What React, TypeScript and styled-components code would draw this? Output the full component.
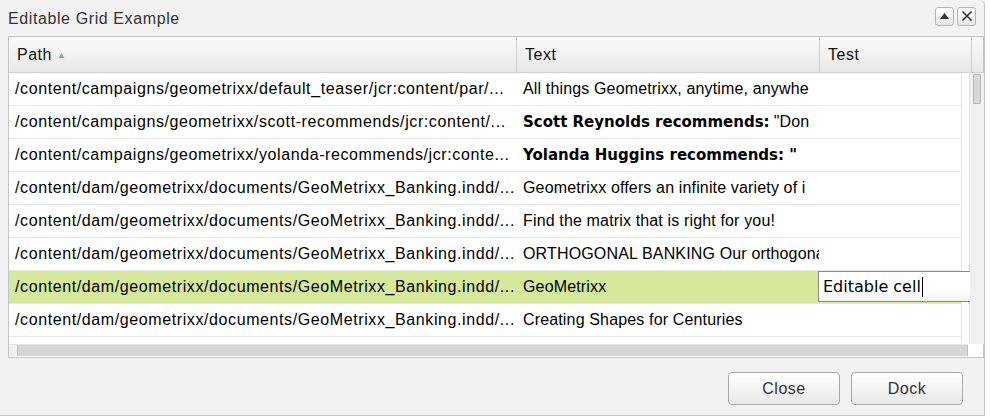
import React from "react";
import styled, { createGlobalStyle } from "styled-components";

const GlobalStyle = createGlobalStyle`
    html, body {
        margin: 0;
        padding: 0;
        background: #ffffff;
    }
    body {
        font-family: "Liberation Sans", Arial, sans-serif;
    }
`;

const Window = styled.div`
    width: 985px;
    height: 416px;
    background: #f2f2f2;
    border-right: 1px solid #c4c4c4;
    border-bottom: 1px solid #c4c4c4;
    border-top-right-radius: 5px;
    display: flex;
    flex-direction: column;
    box-sizing: border-box;
`;

const TitleBar = styled.div`
    height: 36px;
    display: flex;
    align-items: center;
    justify-content: space-between;
    padding-left: 8px;
    padding-right: 8px;
    box-sizing: border-box;
`;

const Title = styled.span`
    font-size: 16px;
    letter-spacing: 0.6px;
    color: #333333;
    padding-top: 2px;
`;

const Tools = styled.div`
    display: flex;
    gap: 3px;
    margin-top: -4px;
`;

const ToolButton = styled.div`
    width: 19px;
    height: 19px;
    border: 1px solid #b4b4b4;
    border-radius: 3px;
    background: linear-gradient(#ffffff, #e6e6e6);
    display: flex;
    align-items: center;
    justify-content: center;
    box-sizing: border-box;
`;

const Grid = styled.div`
    margin-left: 8px;
    width: 976px;
    height: 322px;
    border: 1px solid #c4c4c4;
    background: #ffffff;
    display: flex;
    flex-direction: column;
    box-sizing: border-box;
`;

const HeaderRow = styled.div`
    display: flex;
    height: 36px;
    background: linear-gradient(#fafafa, #e8e8e8);
    border-bottom: 1px solid #d0d0d0;
    box-sizing: border-box;
`;

const HeaderCell = styled.div<{ $w: number }>`
    width: ${p => p.$w}px;
    flex: none;
    display: flex;
    align-items: center;
    padding-left: 8px;
    box-sizing: border-box;
    border-right: 1px solid #d0d0d0;
    font-size: 16px;
    letter-spacing: 0.5px;
    color: #111111;
`;

const SortArrow = styled.span`
    font-size: 9px;
    color: #999999;
    margin-left: 5px;
    margin-top: 1px;
`;

const Middle = styled.div`
    display: flex;
    flex: 1;
    min-height: 0;
`;

const Body = styled.div`
    width: 952px;
    flex: none;
    display: flex;
    flex-direction: column;
    border-right: 1px solid #e6e6e6;
`;

const Row = styled.div<{ $selected?: boolean }>`
    display: flex;
    height: 33px;
    flex: none;
    background: ${p => (p.$selected ? "#d5e89c" : "#ffffff")};
    border-bottom: 1px solid #e6e6e6;
    box-sizing: border-box;
    position: relative;
`;

const Cell = styled.div<{ $w: number; $spacing?: number }>`
    width: ${p => p.$w}px;
    flex: none;
    display: flex;
    align-items: center;
    padding-left: 6px;
    box-sizing: border-box;
    white-space: nowrap;
    overflow: hidden;
    font-size: 16px;
    letter-spacing: ${p => p.$spacing ?? 0.6}px;
    color: #000000;
`;

const Strong = styled.b`
    font-family: "DejaVu Sans", Verdana, sans-serif;
    font-size: 15px;
    letter-spacing: 0;
    font-weight: bold;
    margin-right: 4px;
`;

const EditorCell = styled.div`
    position: absolute;
    left: 809px;
    top: 0px;
    width: 152px;
    height: 31px;
    border: 1px solid #8a8a8a;
    border-right: none;
    background: linear-gradient(#ffffff 60%, #f1f1f1);
    box-sizing: border-box;
    display: flex;
    align-items: center;
    padding-left: 4px;
    font-family: "DejaVu Sans", Verdana, sans-serif;
    font-size: 16px;
    color: #000000;
    z-index: 2;
`;

const Caret = styled.span`
    display: inline-block;
    width: 1px;
    height: 20px;
    background: #000000;
    margin-left: 1px;
`;

const VScroll = styled.div`
    margin-left: 7px;
    width: 15px;
    flex: none;
    background: #f0f0f0;
    border-left: 1px solid #e0e0e0;
    padding: 1px 3px 0 3px;
    box-sizing: border-box;
`;

const VThumb = styled.div`
    height: 28px;
    background: #d6d6d6;
    border: 1px solid #b8b8b8;
    border-radius: 1px;
`;

const HScrollRow = styled.div`
    display: flex;
    height: 12px;
    flex: none;
    margin-bottom: 1px;
`;

const HScroll = styled.div`
    width: 959px;
    background: #f0f0f0;
    padding-left: 8px;
    box-sizing: border-box;
    border-top: 1px solid #e6e6e6;
`;

const HThumb = styled.div`
    height: 100%;
    background: #d6d6d6;
    border-left: 1px solid #c0c0c0;
    border-right: 1px solid #c0c0c0;
    box-sizing: border-box;
`;

const Corner = styled.div`
    flex: 1;
    background: #ffffff;
`;

const Footer = styled.div`
    flex: 1;
    display: flex;
    justify-content: flex-end;
    align-items: flex-start;
    gap: 11px;
    padding-top: 14px;
    padding-right: 21px;
`;

const Button = styled.button`
    width: 112px;
    height: 33px;
    border: 1px solid #a8a8a8;
    border-radius: 4px;
    background: linear-gradient(#ffffff, #e8e8e8);
    font-family: "Liberation Sans", Arial, sans-serif;
    font-size: 16px;
    letter-spacing: 0.5px;
    color: #333333;
    box-shadow: inset 0 1px 0 #ffffff;
`;

const COLS = [508, 302, 142];

type RowData = { path: string; bold?: string; text: string; selected?: boolean };

const rows: RowData[] = [
    { path: "/content/campaigns/geometrixx/default_teaser/jcr:content/par/...", text: "All things Geometrixx, anytime, anywhe" },
    { path: "/content/campaigns/geometrixx/scott-recommends/jcr:content/...", bold: "Scott Reynolds recommends:", text: "\"Don" },
    { path: "/content/campaigns/geometrixx/yolanda-recommends/jcr:conte...", bold: "Yolanda Huggins recommends: \"", text: "" },
    { path: "/content/dam/geometrixx/documents/GeoMetrixx_Banking.indd/...", text: "Geometrixx offers an infinite variety of i" },
    { path: "/content/dam/geometrixx/documents/GeoMetrixx_Banking.indd/...", text: "Find the matrix that is right for you!" },
    { path: "/content/dam/geometrixx/documents/GeoMetrixx_Banking.indd/...", text: "ORTHOGONAL BANKING Our orthogona" },
    { path: "/content/dam/geometrixx/documents/GeoMetrixx_Banking.indd/...", text: "GeoMetrixx", selected: true },
    { path: "/content/dam/geometrixx/documents/GeoMetrixx_Banking.indd/...", text: "Creating Shapes for Centuries" },
];

export default function App() {
    return (
        <>
            <GlobalStyle />
            <Window>
                <TitleBar>
                    <Title>Editable Grid Example</Title>
                    <Tools>
                        <ToolButton>
                            <svg width="11" height="8" viewBox="0 0 11 8">
                                <path d="M5.5 1 L10 7 L1 7 Z" fill="#333" />
                            </svg>
                        </ToolButton>
                        <ToolButton>
                            <svg width="12" height="12" viewBox="0 0 12 12">
                                <path d="M1.5 1.5 L10.5 10.5 M10.5 1.5 L1.5 10.5" stroke="#333" strokeWidth="1.6" />
                            </svg>
                        </ToolButton>
                    </Tools>
                </TitleBar>
                <Grid>
                    <HeaderRow>
                        <HeaderCell $w={COLS[0]}>
                            Path<SortArrow>▲</SortArrow>
                        </HeaderCell>
                        <HeaderCell $w={COLS[1] + 1}>Text</HeaderCell>
                        <HeaderCell $w={COLS[2] + 10}>Test</HeaderCell>
                    </HeaderRow>
                    <Middle>
                        <Body>
                            {rows.map((r, i) => (
                                <Row key={i} $selected={r.selected}>
                                    <Cell $w={COLS[0]}>{r.path}</Cell>
                                    <Cell $w={COLS[1]} $spacing={0.15}>
                                        {r.bold && <Strong>{r.bold}</Strong>}
                                        {r.text}
                                    </Cell>
                                    <Cell $w={COLS[2]} />
                                    {r.selected && (
                                        <EditorCell>
                                            Editable cell<Caret />
                                        </EditorCell>
                                    )}
                                </Row>
                            ))}
                        </Body>
                        <VScroll>
                            <VThumb />
                        </VScroll>
                    </Middle>
                    <HScrollRow>
                        <HScroll>
                            <HThumb />
                        </HScroll>
                        <Corner />
                    </HScrollRow>
                </Grid>
                <Footer>
                    <Button>Close</Button>
                    <Button>Dock</Button>
                </Footer>
            </Window>
        </>
    );
}
